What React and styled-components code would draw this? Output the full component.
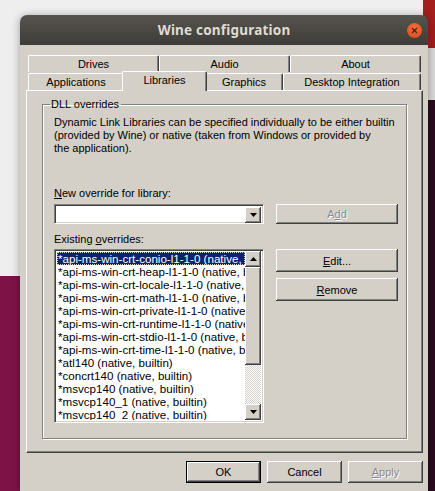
import React from "react";
import styled, { createGlobalStyle } from "styled-components";

const GlobalStyle = createGlobalStyle`
  html, body {
    margin: 0;
    padding: 0;
    overflow: hidden;
  }
  body {
    font-family: "Liberation Sans", Arial, sans-serif;
  }
`;

const Page = styled.div`
  width: 435px;
  height: 491px;
  overflow: hidden;
  padding-top: 15px;
  box-sizing: border-box;
  background:
    linear-gradient(#eeeeee 0 276px, #7d1247 276px) left top / 20px 100% no-repeat,
    linear-gradient(#a41e1e 0 48px, #dadada 48px 100px, #2a0b1f 100px) right top / 12px 100% no-repeat,
    #efefef;
`;

const Window = styled.div`
  margin-left: 20px;
  width: 408px;
  box-shadow: 0 1px 8px rgba(0, 0, 0, 0.35);
  border-radius: 7px 7px 0 0;
`;

const TitleBar = styled.div`
  position: relative;
  height: 30px;
  display: flex;
  align-items: center;
  justify-content: center;
  border-radius: 7px 7px 0 0;
  background: linear-gradient(#57544e, #3e3c38);
  color: #dfdbd2;
  font-family: "Noto Sans", "DejaVu Sans", sans-serif;
  font-weight: 700;
  font-size: 13.5px;
  letter-spacing: 0.2px;
`;

const CloseButton = styled.div`
  position: absolute;
  right: 6px;
  top: 8px;
  width: 15px;
  height: 15px;
  border-radius: 50%;
  background: radial-gradient(circle at 50% 35%, #f2703e, #d9481a);
  display: flex;
  align-items: center;
  justify-content: center;
`;

const Body = styled.div`
  background: #d4d0c8;
  padding: 10px 5px 8px 6px;
  font-size: 11px;
  color: #000;
`;

const TabRow = styled.div`
  display: flex;
  padding: 0 2px;
  height: ${(p) => p.$h}px;
  align-items: flex-end;
`;

const Tab = styled.div`
  box-sizing: border-box;
  position: relative;
  flex: ${(p) => (p.$w ? `0 0 ${p.$w}px` : "1")};
  height: ${(p) => (p.$active ? "20px" : "17px")};
  margin: ${(p) => (p.$active ? "0 -2px -1px" : "0")};
  z-index: ${(p) => (p.$active ? 1 : 0)};
  background: #d4d0c8;
  border-top: 1px solid #ffffff;
  border-left: 1px solid #ffffff;
  border-right: 1px solid #404040;
  box-shadow: inset -1px 0 0 #808080;
  border-radius: 2px 2px 0 0;
  display: flex;
  align-items: center;
  justify-content: center;
  padding-bottom: ${(p) => (p.$active ? "3px" : "0")};
  font-size: 11px;
  white-space: nowrap;
`;

const Panel = styled.div`
  box-sizing: border-box;
  height: 363px;
  border-top: 1px solid #ffffff;
  border-left: 1px solid #ffffff;
  border-right: 1px solid #404040;
  border-bottom: 1px solid #404040;
  box-shadow: inset -1px -1px 0 #808080;
  padding: 7px 15px 0 15px;
`;

const Group = styled.fieldset`
  box-sizing: border-box;
  margin: 0;
  min-width: 0;
  width: 365px;
  height: 341px;
  border: 1px solid #808080;
  box-shadow: 1px 1px 0 #ffffff, inset 1px 1px 0 #ffffff;
  padding: 6px 8px 0 11px;
`;

const Legend = styled.legend`
  padding: 0 2px 0 1px;
  margin-left: -4px;
  font-size: 11px;
`;

const Description = styled.p`
  margin: 0 0 32px;
  font-size: 11px;
  line-height: 13px;
  white-space: nowrap;
`;

const Label = styled.div`
  font-size: 11px;
  line-height: 13px;
  margin-bottom: ${(p) => p.$mb || 4}px;
`;

const Row = styled.div`
  display: flex;
  gap: 12px;
  align-items: flex-start;
`;

const LeftCol = styled.div`
  flex: 0 0 210px;
  min-width: 0;
`;

const RightCol = styled.div`
  flex: 0 0 122px;
  min-width: 0;
  display: flex;
  flex-direction: column;
  gap: ${(p) => p.$gap || 0}px;
  padding-top: ${(p) => p.$top || 0}px;
`;

const Sunken = styled.div`
  box-sizing: border-box;
  background: #ffffff;
  border-top: 1px solid #808080;
  border-left: 1px solid #808080;
  border-right: 1px solid #ffffff;
  border-bottom: 1px solid #ffffff;
  box-shadow: inset 1px 1px 0 #404040, inset -1px -1px 0 #d4d0c8;
`;

const Combo = styled(Sunken)`
  height: 20px;
  display: flex;
  justify-content: flex-end;
  padding: 2px;
  margin-bottom: 9px;
`;

const ArrowBox = styled.div`
  box-sizing: border-box;
  width: ${(p) => p.$w || 16}px;
  height: ${(p) => p.$h || 16}px;
  flex: 0 0 auto;
  background: #d4d0c8;
  box-shadow: inset -1px -1px 0 #404040, inset 1px 1px 0 #ffffff, inset -2px -2px 0 #808080;
  display: flex;
  align-items: center;
  justify-content: center;
`;

const Button = styled.div`
  box-sizing: border-box;
  width: ${(p) => p.$w || 122}px;
  height: ${(p) => p.$h || 22}px;
  background: #d4d0c8;
  border: ${(p) => (p.$default ? "1px solid #000" : "none")};
  box-shadow: inset -1px -1px 0 #404040, inset 1px 1px 0 #ffffff, inset -2px -2px 0 #808080;
  display: flex;
  align-items: center;
  justify-content: center;
  font-size: 11px;
  color: ${(p) => (p.$disabled ? "#8a8a8a" : "#000")};
  text-shadow: ${(p) => (p.$disabled ? "1px 1px 0 #ffffff" : "none")};
`;

const ListBox = styled(Sunken)`
  height: 174px;
  display: flex;
  padding: 1px 2px 2px;
  overflow: hidden;
`;

const Items = styled.div`
  flex: 1;
  min-width: 0;
  overflow: hidden;
  padding-top: 1px;
`;

const Item = styled.div`
  height: 13px;
  line-height: 13px;
  font-size: 11.6px;
  white-space: nowrap;
  overflow: hidden;
  padding-left: 1px;
  box-sizing: border-box;
  background: ${(p) => (p.$selected ? "#0a246a" : "transparent")};
  color: ${(p) => (p.$selected ? "#ffffff" : "#000")};
  outline: ${(p) => (p.$selected ? "1px dotted #d4d0c8" : "none")};
  outline-offset: -1px;
`;

const ScrollBar = styled.div`
  flex: 0 0 16px;
  display: flex;
  flex-direction: column;
`;

const Thumb = styled.div`
  box-sizing: border-box;
  height: 98px;
  background: #d4d0c8;
  box-shadow: inset -1px -1px 0 #404040, inset 1px 1px 0 #ffffff, inset -2px -2px 0 #808080;
`;

const Track = styled.div`
  flex: 1;
  background: repeating-conic-gradient(#ffffff 0 25%, #d4d0c8 0 50%) 0 0 / 2px 2px;
`;

const Footer = styled.div`
  display: flex;
  justify-content: flex-end;
  gap: 6px;
  padding: 8px 0 0;
`;

const U = styled.span`
  text-decoration: underline;
  text-underline-offset: 1px;
`;

const Up = () => (
  <svg width="7" height="4" viewBox="0 0 7 4">
    <polygon points="0,4 7,4 3.5,0" fill="#000" />
  </svg>
);

const Down = () => (
  <svg width="7" height="4" viewBox="0 0 7 4">
    <polygon points="0,0 7,0 3.5,4" fill="#000" />
  </svg>
);

const overrides = [
  "*api-ms-win-crt-conio-l1-1-0 (native, builtin)",
  "*api-ms-win-crt-heap-l1-1-0 (native, builtin)",
  "*api-ms-win-crt-locale-l1-1-0 (native, builtin)",
  "*api-ms-win-crt-math-l1-1-0 (native, builtin)",
  "*api-ms-win-crt-private-l1-1-0 (native, builtin)",
  "*api-ms-win-crt-runtime-l1-1-0 (native, builtin)",
  "*api-ms-win-crt-stdio-l1-1-0 (native, builtin)",
  "*api-ms-win-crt-time-l1-1-0 (native, builtin)",
  "*atl140 (native, builtin)",
  "*concrt140 (native, builtin)",
  "*msvcp140 (native, builtin)",
  "*msvcp140_1 (native, builtin)",
  "*msvcp140_2 (native, builtin)",
];

export default function App() {
  return (
    <>
      <GlobalStyle />
      <Page>
        <Window>
          <TitleBar>
            Wine configuration
            <CloseButton>
              <svg width="7" height="7" viewBox="0 0 7 7">
                <path d="M1 1L6 6M6 1L1 6" stroke="#5a1a08" strokeWidth="1.3" />
              </svg>
            </CloseButton>
          </TitleBar>
          <Body>
            <TabRow $h={17}>
              <Tab>Drives</Tab>
              <Tab>Audio</Tab>
              <Tab>About</Tab>
            </TabRow>
            <TabRow $h={18}>
              <Tab $w={96}>Applications</Tab>
              <Tab $w={85} $active>Libraries</Tab>
              <Tab $w={78}>Graphics</Tab>
              <Tab $w={138}>Desktop Integration</Tab>
            </TabRow>
            <Panel>
              <Group>
                <Legend>DLL overrides</Legend>
                <Description>
                  Dynamic Link Libraries can be specified individually to be either builtin
                  <br />
                  (provided by Wine) or native (taken from Windows or provided by
                  <br />
                  the application).
                </Description>
                <Label>
                  <U>N</U>ew override for library:
                </Label>
                <Row>
                  <LeftCol>
                    <Combo>
                      <ArrowBox>
                        <Down />
                      </ArrowBox>
                    </Combo>
                    <Label $mb={3}>
                      Existing <U>o</U>verrides:
                    </Label>
                    <ListBox>
                      <Items>
                        {overrides.map((o, i) => (
                          <Item key={o} $selected={i === 0}>
                            {o}
                          </Item>
                        ))}
                      </Items>
                      <ScrollBar>
                        <ArrowBox>
                          <Up />
                        </ArrowBox>
                        <Thumb />
                        <Track />
                        <ArrowBox>
                          <Down />
                        </ArrowBox>
                      </ScrollBar>
                    </ListBox>
                  </LeftCol>
                  <RightCol>
                    <Button $h={20} $disabled>
                      A<U>d</U>d
                    </Button>
                    <RightCol $top={25} $gap={6}>
                      <Button $h={23}>
                        <U>E</U>dit...
                      </Button>
                      <Button $h={23}>
                        <U>R</U>emove
                      </Button>
                    </RightCol>
                  </RightCol>
                </Row>
              </Group>
            </Panel>
            <Footer>
              <Button $w={75} $h={22} $default>
                OK
              </Button>
              <Button $w={75} $h={22}>
                Cancel
              </Button>
              <Button $w={75} $h={22} $disabled>
                <U>A</U>pply
              </Button>
            </Footer>
          </Body>
        </Window>
      </Page>
    </>
  );
}
